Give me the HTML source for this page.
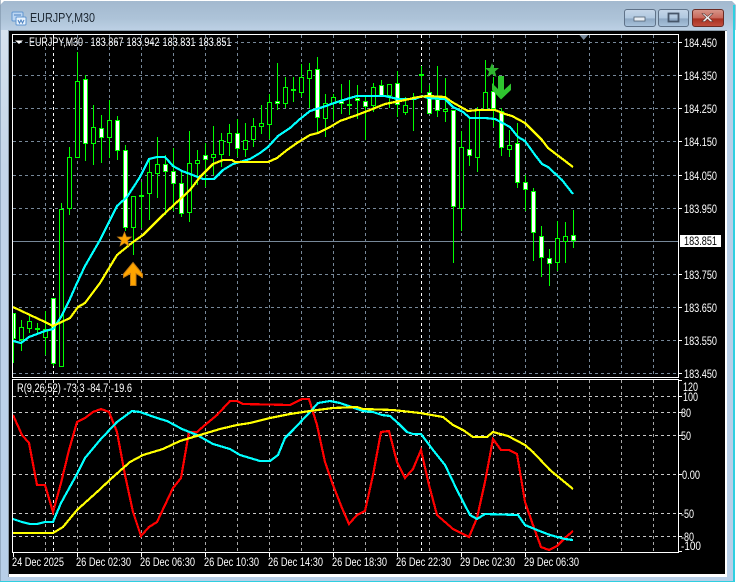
<!DOCTYPE html>
<html><head><meta charset="utf-8"><style>
html,body{margin:0;padding:0;background:#fff}
svg{display:block}
text{font-family:"Liberation Sans",sans-serif}
</style></head><body>
<svg xmlns="http://www.w3.org/2000/svg" width="736" height="582" viewBox="0 0 736 582">
<defs>
<linearGradient id="tb" x1="0" y1="0" x2="0" y2="1"><stop offset="0" stop-color="#a3b9cf"/><stop offset=".6" stop-color="#adc3d8"/><stop offset="1" stop-color="#bcd0e4"/></linearGradient>
<linearGradient id="lf" x1="0" y1="0" x2="0" y2="1"><stop offset="0" stop-color="#d6e2ee"/><stop offset=".25" stop-color="#c3d5e8"/><stop offset="1" stop-color="#b8cfe8"/></linearGradient>
<linearGradient id="bb" x1="0" y1="0" x2="0" y2="1"><stop offset="0" stop-color="#c5d6e8"/><stop offset=".5" stop-color="#b0c8e0"/><stop offset=".55" stop-color="#8fa9c4"/><stop offset="1" stop-color="#a9c3dc"/></linearGradient>
<linearGradient id="cb" x1="0" y1="0" x2="0" y2="1"><stop offset="0" stop-color="#d8988c"/><stop offset=".5" stop-color="#c8675a"/><stop offset=".55" stop-color="#a83020"/><stop offset="1" stop-color="#c25040"/></linearGradient>
</defs>
<rect width="736" height="582" fill="#fff"/>
<path d="M5 1H731L735 5V581H0V6Z" fill="#b8cfe8"/>
<rect x="0" y="1" width="736" height="29" fill="url(#tb)"/>
<path d="M0 0H5L0 5ZM731 0H736V5Z" fill="#fff"/>
<rect x="1" y="30" width="8" height="546" fill="url(#lf)"/>
<rect x="0" y="0" width="1" height="582" fill="#7d93a8" opacity=".6"/>
<rect x="733" y="5" width="2" height="577" fill="#2fcfe0"/>
<rect x="0" y="581" width="735" height="1" fill="#2fcfe0"/>
<rect x="8" y="30" width="719" height="547" fill="#fff"/>
<rect x="8" y="30" width="1" height="547" fill="#8a9aa8"/>
<rect x="8" y="30" width="719" height="1" fill="#8a9aa8"/>
<rect x="9" y="31" width="716" height="543" fill="#000"/>
<!-- app icon -->
<rect x="12" y="12" width="11" height="9" rx="1" fill="#bcd6f2" stroke="#5f95d0"/>
<rect x="16" y="17" width="10" height="8" rx="1" fill="#e8f2fc" stroke="#5f95d0"/>
<path d="M14 15h7M18 20l1.500 3 1.500-3 1.500 3 1.500-3" stroke="#4a80c0" fill="none"/>
<text x="30" y="22" font-size="13" fill="#1c2732" textLength="65" lengthAdjust="spacingAndGlyphs">EURJPY,M30</text>
<!-- window buttons -->
<rect x="624.500" y="9.500" width="31" height="17" rx="2.500" fill="url(#bb)" stroke="#5f7288"/>
<rect x="634" y="17" width="11" height="4" fill="#e8eef4" stroke="#4f5f70" stroke-width=".8"/>
<rect x="658.500" y="9.500" width="30" height="17" rx="2.500" fill="url(#bb)" stroke="#5f7288"/>
<rect x="668.500" y="13.500" width="10" height="8" fill="none" stroke="#46566a" stroke-width="1.800"/>
<rect x="692.500" y="9.500" width="31" height="17" rx="2.500" fill="url(#cb)" stroke="#6b2b24"/>
<path d="M704 13.500l3.500 3 3.500-3h2l-4 4 4 4h-3l-2.500-2.500-2.500 2.500h-3l4-4-4-4z" fill="#f4f4f4" stroke="#5a3a38" stroke-width=".6"/>

<!-- main grid -->
<g shape-rendering="crispEdges" fill="none">
<path d="M13 42.500H678M13 75.500H678M13 108.500H678M13 141.500H678M13 175.500H678M13 208.500H678M13 274.500H678M13 307.500H678M13 340.500H678M13 373.500H678" stroke="#778899" stroke-dasharray="3 3"/>
<path d="M45.500 35V377M77.500 35V377M109.500 35V377M141.500 35V377M173.500 35V377M205.500 35V377M237.500 35V377M269.500 35V377M301.500 35V377M333.500 35V377M365.500 35V377M397.500 35V377M429.500 35V377M461.500 35V377M493.500 35V377M525.500 35V377M557.500 35V377M589.500 35V377M621.500 35V377M653.500 35V377" stroke="#778899" stroke-dasharray="3 3"/>
<path d="M53.500 35V377M421.500 35V377" stroke="#fff" stroke-dasharray="3 3"/>
<path d="M13 241.500H678" stroke="#778899"/>
<!-- wicks -->
<path stroke="#00ff00" d="M13.500 313V363M21.500 320V351M29.500 315V333M37.500 323V333M45.500 311V355M53.500 298V366M61.500 203V367M69.500 147V215M77.500 52V157M85.500 75V161M93.500 105V165M101.500 115V163M109.500 100V158M117.500 116V160M125.500 145V231M133.500 196V255M141.500 182V228M149.500 158V220M157.500 137V198M165.500 155V215M173.500 148V211M181.500 172V217M189.500 131V222M197.500 150V185M205.500 143V187M213.500 126V175M221.500 133V167M229.500 124V156M237.500 119V157M245.500 123V157M253.500 118V147M261.500 105V134M269.500 94V139M277.500 63V110M285.500 77V108M293.500 77V102M301.500 64V97M309.500 63V108M317.500 57V133M325.500 94V137M333.500 94V120M341.500 84V114M349.500 80V115M357.500 85V119M365.500 95V140M373.500 83V112M381.500 80V97M389.500 84V108M397.500 71V117M405.500 97V115M413.500 93V131M421.500 66V93M429.500 85V113M437.500 66V117M445.500 78V122M453.500 110V263M461.500 131V231M469.500 117V166M477.500 107V172M485.500 60V110M493.500 77V127M501.500 108V156M509.500 130V157M517.500 123V188M525.500 175V211M533.500 188V261M541.500 226V277M549.500 249V286M557.500 221V271M565.500 222V263M573.500 210V248"/>
<!-- hollow bodies -->
<path stroke="#00ff00" fill="#000" d="M19.500 327.500h4v12h-4zM27.500 321.500h4v7h-4zM35.500 328.500h4v1h-4zM43.500 329.500h4v8h-4zM59.500 209.500h4v157h-4zM67.500 157.500h4v51h-4zM75.500 81.500h4v76h-4zM91.500 127.500h4v16h-4zM107.500 120.500h4v17h-4zM131.500 196.500h4v31h-4zM139.500 195.500h4v1h-4zM147.500 172.500h4v21h-4zM155.500 164.500h4v9h-4zM187.500 163.500h4v49h-4zM195.500 160.500h4v3h-4zM211.500 154.500h4v3h-4zM219.500 140.500h4v14h-4zM227.500 133.500h4v9h-4zM243.500 140.500h4v9h-4zM251.500 126.500h4v13h-4zM259.500 123.500h4v3h-4zM267.500 102.500h4v22h-4zM283.500 87.500h4v16h-4zM291.500 89.500h4v1h-4zM299.500 77.500h4v15h-4zM307.500 70.500h4v8h-4zM323.500 103.500h4v15h-4zM331.500 97.500h4v6h-4zM347.500 104.500h4v1h-4zM371.500 87.500h4v18h-4zM387.500 84.500h4v11h-4zM403.500 105.500h4v7h-4zM419.500 74.500h4v1h-4zM443.500 109.500h4v2h-4zM459.500 147.500h4v61h-4zM475.500 110.500h4v47h-4zM483.500 92.500h4v18h-4zM507.500 145.500h4v4h-4zM555.500 238.500h4v24h-4zM563.500 236.500h4v5h-4z"/>
<!-- white bodies -->
<path stroke="#00ff00" fill="#fff" d="M13.500 313.500h2v25h-2zM51.500 298.500h4v65h-4zM83.500 79.500h4v64h-4zM99.500 128.500h4v9h-4zM115.500 120.500h4v30h-4zM123.500 150.500h4v77h-4zM163.500 164.500h4v7h-4zM171.500 171.500h4v12h-4zM179.500 183.500h4v30h-4zM203.500 155.500h4v4h-4zM235.500 133.500h4v15h-4zM275.500 101.500h4v2h-4zM315.500 69.500h4v48h-4zM339.500 101.500h4v2h-4zM355.500 98.500h4v2h-4zM363.500 101.500h4v5h-4zM379.500 85.500h4v11h-4zM395.500 83.500h4v21h-4zM427.500 92.500h4v21h-4zM435.500 99.500h4v11h-4zM451.500 110.500h4v96h-4zM467.500 149.500h4v6h-4zM491.500 91.500h4v17h-4zM499.500 111.500h4v36h-4zM515.500 143.500h4v39h-4zM523.500 182.500h4v7h-4zM531.500 191.500h4v41h-4zM539.500 236.500h4v21h-4zM547.500 258.500h4v5h-4zM571.500 235.500h4v5h-4z"/>
<!-- moving averages -->
<polyline stroke="#00ffff" stroke-width="2.200" points="13,341 21,343 29,337 37,334 45,331 53,329 61,317 69,301 77,283 85,266 100,240 117,206 127,197 140,177 149,159 157,157 165,157 173,166 182,171 190,174 203,179 214,179 223,170 233,164 250,159 260,153 268,147 278,136 290,128 300,119 310,111 323,107 337,102 350,98 357,96 385,96 398,99 415,99 422,96 428,98 445,99 453,107 463,112 470,118 485,118 495,119 510,127 518,137 525,141 535,155 542,164 548,167 562,180 573,194"/>
<polyline stroke="#ffff00" stroke-width="2.200" points="13,307 30,315 45,322 53,326 70,318 78,307 85,303 100,283 117,255 133,242 143,235 163,215 177,202 190,190 200,177 213,164 223,160 232,160 235,162 268,162 277,158 287,150 297,143 310,135 318,133 330,127 340,121 357,115 370,110 385,104 405,100 418,97 428,96 445,97 452,102 468,111 478,110 495,110 505,114 512,116 525,123 542,140 548,148 573,167"/>
</g>
<!-- markers -->
<path d="M133 262.500L142.500 274V277.500L136 273.500V285.500H130.500V273.500L123.500 277.500V274Z" fill="#ffa500" stroke="#c47a10"/>
<path d="M124.500 232L126.500 237H131.500L127.500 240.500L129 246L124.500 243L120 246L121.500 240.500L117.500 237H122.500Z" fill="#ffa500" stroke="#b8781a" stroke-width=".7"/>
<path d="M498 76H504V90L511 83.500V90L501 99.500L492 90V83L498 89Z" fill="#2fc42f"/>
<path d="M492 63L494 68H499L495 71.500L496.500 77L492 74L487.500 77L489 71.500L485 68H490Z" fill="#2fb52f"/>
<path d="M579 34.500H588.500L583.700 40Z" fill="#778899"/>
<rect x="12.500" y="34.500" width="666" height="343" fill="none" stroke="#fff" shape-rendering="crispEdges"/>

<!-- lower pane -->
<g shape-rendering="crispEdges" fill="none">
<path d="M13 396.500H678M13 412.500H678M13 435.500H678M13 474.500H678M13 513.500H678M13 536.500H678" stroke="#c8c8c8" stroke-dasharray="3 3"/>
<path d="M45.500 380V552M77.500 380V552M109.500 380V552M141.500 380V552M173.500 380V552M205.500 380V552M237.500 380V552M269.500 380V552M301.500 380V552M333.500 380V552M365.500 380V552M397.500 380V552M429.500 380V552M461.500 380V552M493.500 380V552M525.500 380V552M557.500 380V552M589.500 380V552M621.500 380V552M653.500 380V552" stroke="#a8a8a8" stroke-dasharray="3 3"/>
<path d="M53.500 380V552M421.500 380V552" stroke="#fff" stroke-dasharray="3 3"/>
<polyline stroke="#ff0000" stroke-width="2.200" points="13,415 22,435 29,443 37,485 45,485 53,512 61,483 69,450 77,422 85,418 93,412 101,409 109,412 117,432 125,475 133,512 141,536 149,527 157,522 165,505 173,488 181,478 189,432 197,432 205,425 217,415 230,401 237,401 243,404 290,405 302,399 309,399 317,425 325,462 333,485 342,508 349,524 357,515 365,511 373,475 381,432 389,431 397,462 405,478 413,469 421,450 429,485 437,515 445,522 453,529 461,533 469,537 477,518 485,482 493,439 501,450 509,450 517,454 525,502 533,525 541,547 549,550 557,546 565,538 573,531"/>
<polyline stroke="#00ffff" stroke-width="2.200" points="13,519 22,522 30,524 37,524 45,522 53,522 61,503 77,474 85,458 100,440 117,422 132,411 140,412 157,418 167,421 182,429 197,435 213,444 230,449 240,455 250,458 260,461 270,461 278,455 285,438 293,430 310,412 318,403 330,401 340,403 363,411 373,412 382,415 390,416 398,423 407,432 413,434 421,434 433,450 445,465 457,490 470,515 477,519 485,514 518,515 525,525 537,530 550,535 565,539 573,540"/>
<polyline stroke="#ffff00" stroke-width="2.200" points="13,533 53,533 63,527 77,510 97,492 113,477 130,462 143,455 163,449 180,441 200,435 220,429 237,425 250,423 270,418 290,414 310,411 333,408 357,407 363,409 393,410 420,413 443,417 453,425 463,430 473,437 487,437 493,432 508,436 525,445 533,452 550,470 573,489"/>
<rect x="12.500" y="379.500" width="666" height="173" stroke="#fff"/>
<!-- ticks -->
<path stroke="#fff" d="M679 42.500h3M679 75.500h3M679 108.500h3M679 141.500h3M679 175.500h3M679 208.500h3M679 274.500h3M679 307.500h3M679 340.500h3M679 373.500h3M679 380.500h3M679 396.500h3M679 412.500h3M679 435.500h3M679 474.500h3M679 513.500h3M679 536.500h3M679 551.500h3M13.500 553v4M77.500 553v4M141.500 553v4M205.500 553v4M269.500 553v4M333.500 553v4M397.500 553v4M461.500 553v4M525.500 553v4"/>
</g>
<rect x="680" y="235" width="41" height="12" fill="#fff"/>
<g font-size="11.500" fill="#fff">
<path d="M15 40.500h8l-4 3.500z" fill="#fff"/>
<text x="29" y="46" textLength="54" lengthAdjust="spacingAndGlyphs">EURJPY,M30</text>
<text x="90.500" y="46" textLength="33" lengthAdjust="spacingAndGlyphs">183.867</text>
<text x="126.500" y="46" textLength="33" lengthAdjust="spacingAndGlyphs">183.942</text>
<text x="162.500" y="46" textLength="33" lengthAdjust="spacingAndGlyphs">183.831</text>
<text x="198.500" y="46" textLength="33" lengthAdjust="spacingAndGlyphs">183.851</text>
<text x="684" y="47" textLength="33" lengthAdjust="spacingAndGlyphs">184.450</text>
<text x="684" y="80" textLength="33" lengthAdjust="spacingAndGlyphs">184.350</text>
<text x="684" y="113" textLength="33" lengthAdjust="spacingAndGlyphs">184.250</text>
<text x="684" y="146" textLength="33" lengthAdjust="spacingAndGlyphs">184.150</text>
<text x="684" y="180" textLength="33" lengthAdjust="spacingAndGlyphs">184.050</text>
<text x="684" y="213" textLength="33" lengthAdjust="spacingAndGlyphs">183.950</text>
<text x="684" y="245" textLength="33" lengthAdjust="spacingAndGlyphs" fill="#000">183.851</text>
<text x="684" y="279" textLength="33" lengthAdjust="spacingAndGlyphs">183.750</text>
<text x="684" y="312" textLength="33" lengthAdjust="spacingAndGlyphs">183.650</text>
<text x="684" y="345" textLength="33" lengthAdjust="spacingAndGlyphs">183.550</text>
<text x="684" y="378" textLength="33" lengthAdjust="spacingAndGlyphs">183.450</text>
<text x="17" y="392" textLength="115" lengthAdjust="spacingAndGlyphs">R(9,26,52) -73.3 -84.7 -19.6</text>
<text x="683" y="391" textLength="15" lengthAdjust="spacingAndGlyphs">120</text>
<text x="683" y="401" textLength="15" lengthAdjust="spacingAndGlyphs">100</text>
<text x="681" y="417" textLength="10" lengthAdjust="spacingAndGlyphs">80</text>
<text x="681" y="440" textLength="10" lengthAdjust="spacingAndGlyphs">50</text>
<text x="682" y="479" textLength="18" lengthAdjust="spacingAndGlyphs">0.00</text>
<text x="681" y="518" textLength="13" lengthAdjust="spacingAndGlyphs">-50</text>
<text x="681" y="541" textLength="13" lengthAdjust="spacingAndGlyphs">-80</text>
<text x="681" y="550" textLength="20" lengthAdjust="spacingAndGlyphs">-100</text>
<text x="12" y="566" textLength="52" lengthAdjust="spacingAndGlyphs">24 Dec 2025</text>
<text x="76" y="566" textLength="55" lengthAdjust="spacingAndGlyphs">26 Dec 02:30</text>
<text x="140" y="566" textLength="55" lengthAdjust="spacingAndGlyphs">26 Dec 06:30</text>
<text x="204" y="566" textLength="55" lengthAdjust="spacingAndGlyphs">26 Dec 10:30</text>
<text x="268" y="566" textLength="55" lengthAdjust="spacingAndGlyphs">26 Dec 14:30</text>
<text x="332" y="566" textLength="55" lengthAdjust="spacingAndGlyphs">26 Dec 18:30</text>
<text x="396" y="566" textLength="55" lengthAdjust="spacingAndGlyphs">26 Dec 22:30</text>
<text x="460" y="566" textLength="55" lengthAdjust="spacingAndGlyphs">29 Dec 02:30</text>
<text x="524" y="566" textLength="55" lengthAdjust="spacingAndGlyphs">29 Dec 06:30</text>
</g>
</svg>
</body></html>
